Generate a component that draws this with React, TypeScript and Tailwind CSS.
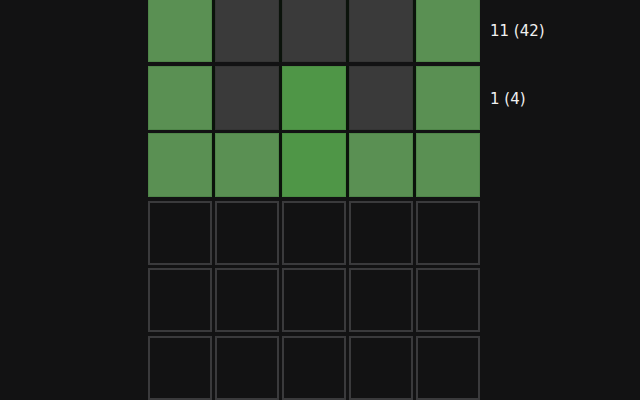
type Cell = 'g' | 'G' | 'x' | 'e';

const ROWS: { cells: Cell[]; label?: string }[] = [
  { cells: ['g', 'x', 'x', 'x', 'g'], label: '11 (42)' },
  { cells: ['g', 'x', 'G', 'x', 'g'], label: '1 (4)' },
  { cells: ['g', 'g', 'G', 'g', 'g'] },
  { cells: ['e', 'e', 'e', 'e', 'e'] },
  { cells: ['e', 'e', 'e', 'e', 'e'] },
  { cells: ['e', 'e', 'e', 'e', 'e'] },
];

function Tile({ kind }: { kind: Cell }) {
  if (kind === 'e') {
    return <div className="h-16 w-16 shrink-0 border-2 border-[#3a3a3c] bg-[#121213]" />;
  }
  const color =
    kind === 'g' ? 'bg-[#5a9053] border-[#4f8549]' : kind === 'G' ? 'bg-[#4f9647] border-[#4a8c42]' : 'bg-[#3a3a3a] border-[#353535]';
  return <div className={`h-16 w-16 shrink-0 border ${color}`} />;
}

export default function App() {
  return (
    <div className="h-[400px] w-[640px] overflow-hidden bg-[#121213] font-['DejaVu_Sans',sans-serif]">
      <div className="ml-[148px] -mt-[2px] flex flex-col gap-[3.5px]">
        {ROWS.map((row, i) => (
          <div key={i} className="flex items-center">
            <div className={`flex gap-[3px] ${i < 3 ? 'bg-[#0b130b]' : ''}`}>
              {row.cells.map((c, j) => (
                <Tile key={j} kind={c} />
              ))}
            </div>
            {row.label && <span className="ml-[10px] mt-[3px] text-[15px] text-[#f0f0f0]">{row.label}</span>}
          </div>
        ))}
      </div>
    </div>
  );
}
